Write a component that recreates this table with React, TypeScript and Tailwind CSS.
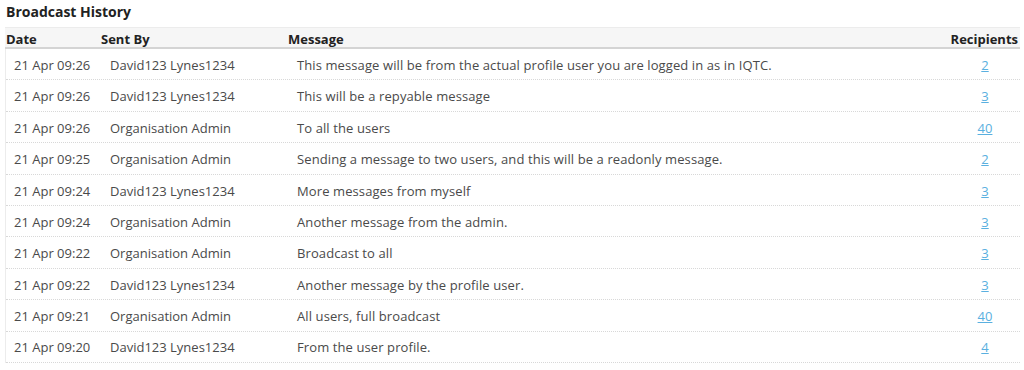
import React from "react";

const rows = [
  ["21 Apr 09:26", "David123 Lynes1234", "This message will be from the actual profile user you are logged in as in IQTC.", "2"],
  ["21 Apr 09:26", "David123 Lynes1234", "This will be a repyable message", "3"],
  ["21 Apr 09:26", "Organisation Admin", "To all the users", "40"],
  ["21 Apr 09:25", "Organisation Admin", "Sending a message to two users, and this will be a readonly message.", "2"],
  ["21 Apr 09:24", "David123 Lynes1234", "More messages from myself", "3"],
  ["21 Apr 09:24", "Organisation Admin", "Another message from the admin.", "3"],
  ["21 Apr 09:22", "Organisation Admin", "Broadcast to all", "3"],
  ["21 Apr 09:22", "David123 Lynes1234", "Another message by the profile user.", "3"],
  ["21 Apr 09:21", "Organisation Admin", "All users, full broadcast", "40"],
  ["21 Apr 09:20", "David123 Lynes1234", "From the user profile.", "4"],
];

export default function App() {
  return (
    <div
      className="w-[1024px] h-[370px] bg-white overflow-hidden text-[13px] text-[#4a4a4a]"
      style={{ fontFamily: '"Open Sans", "DejaVu Sans", sans-serif' }}
    >
      <div className="pl-[6px] pt-[1px] h-[27px] font-bold text-[14px] text-[#222]">Broadcast History</div>
      <div className="ml-[5px] mr-[4px]">
        <div className="grid grid-cols-[96px_187px_1fr_72px] h-[22px] pt-[2px] items-center bg-[#f6f6f6] border-t border-[#ececec] border-b-2 border-b-[#d4d4d4] font-bold text-[13px] text-[#222]">
          <div className="pl-[1px]">Date</div>
          <div>Sent By</div>
          <div>Message</div>
          <div className="text-right pr-[2px]">Recipients</div>
        </div>
        <div className="border-l border-[#ececec]">
          {rows.map((r, i) => (
            <div
              key={i}
              className="grid grid-cols-[96px_187px_1fr_72px] h-[31.4px] pt-[3px] items-center border-b border-dotted border-[#d8d8d8]"
            >
              <div className="pl-[8px]">{r[0]}</div>
              <div className="pl-[8px]">{r[1]}</div>
              <div className="pl-[8px] tracking-[0.1px]">{r[2]}</div>
              <div className="text-center pl-[2px]">
                <a className="text-[#5ab0e0] underline">{r[3]}</a>
              </div>
            </div>
          ))}
        </div>
      </div>
    </div>
  );
}
